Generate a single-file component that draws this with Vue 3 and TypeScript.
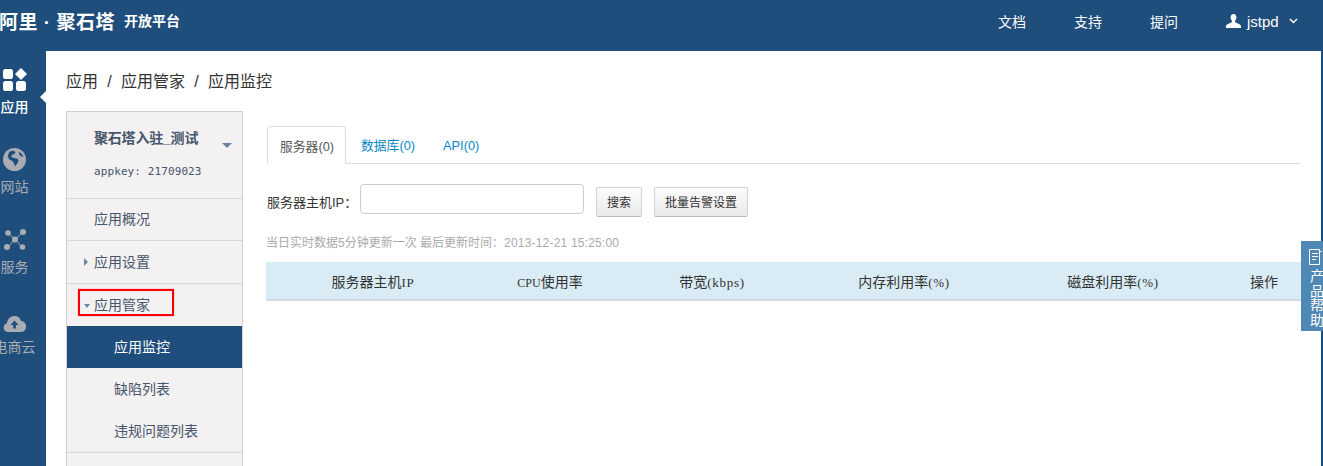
<script setup lang="ts">
interface Col { pre: string; label: string; latin: string }
const cols: Col[] = [
  { pre: '', label: '服务器主机', latin: 'IP' },
  { pre: 'CPU', label: '使用率', latin: '' },
  { pre: '', label: '带宽', latin: '(kbps)' },
  { pre: '', label: '内存利用率', latin: '(%)' },
  { pre: '', label: '磁盘利用率', latin: '(%)' },
  { pre: '', label: '操作', latin: '' },
]
const subItems = ['应用监控', '缺陷列表', '违规问题列表']
</script>

<template>
  <div class="page">
    <header class="top">
      <div class="brand">
        <span class="logo">阿里 · 聚石塔</span>
        <span class="platform">开放平台</span>
      </div>
      <nav class="topnav">
        <a>文档</a>
        <a>支持</a>
        <a>提问</a>
        <span class="user">
          <svg width="15" height="14" viewBox="0 0 15 14"><path fill="#fff" d="M7.5 0C5.6 0 4.6 1.300 4.600 3.200c0 1.400.5 2.700 1.300 3.500v1.300C5 9.200 0 9.800 0 12.200V14h15v-1.800c0-2.400-5-3-5.900-4.200V6.700c.8-.8 1.300-2.100 1.300-3.500C10.400 1.300 9.400 0 7.500 0z"/></svg>
          <span class="uname">jstpd</span>
          <svg width="9" height="6" viewBox="0 0 9 6"><path fill="none" stroke="#fff" stroke-width="1.500" d="M1 1l3.500 3.500L8 1"/></svg>
        </span>
      </nav>
    </header>

    <div class="body">
      <aside class="rail">
        <div class="rail-item active">
          <div class="ico"><svg width="24" height="23" viewBox="0 0 24 23"><g fill="#fff"><rect x="0" y="1" width="10" height="10" rx="2.500"/><path d="M18 0l6 6-6 6-6-6z"/><rect x="0" y="13" width="10" height="10" rx="2.500"/><rect x="13" y="13" width="10" height="10" rx="2.500"/></g></svg></div>
          <span>应用</span>
        </div>
        <div class="rail-item">
          <div class="ico"><svg width="23" height="23" viewBox="0 0 22 22"><circle cx="11" cy="11" r="11" fill="#a9adb3"/><path fill="#1f4e7c" d="M6 3.500l4-1 2 1.500-1.500 2-2 .5-.5 2 2.500 1 3 .5 1.500 2-1.500 3-2 2.500-1-3-1.500-2-3-1.500-1.500-3zM15 3.500l3 2 1.500 3-2.500-.5-1.500-2z"/></svg></div>
          <span>网站</span>
        </div>
        <div class="rail-item">
          <div class="ico"><svg width="24" height="23" viewBox="0 0 24 23"><g fill="#a9adb3"><path fill="none" stroke="#a9adb3" stroke-width="1" d="M5 5l7 6.500L20 4M5 19l7-7.500L19 19"/><circle cx="5" cy="5" r="2.800"/><circle cx="20" cy="4" r="3"/><circle cx="12" cy="11.500" r="3"/><circle cx="4" cy="19" r="3"/><circle cx="19.500" cy="19" r="2.800"/></g></svg></div>
          <span>服务</span>
        </div>
        <div class="rail-item">
          <div class="ico low"><svg width="25" height="16" viewBox="0 0 25 18"><path fill="#a9adb3" d="M5 18a5 5 0 0 1-1-9.800C4.500 3.500 8 0 12.500 0c3.500 0 6.500 2.200 7.500 5.500A6.300 6.300 0 0 1 20 18z"/><path fill="#1f4e7c" d="M12.500 5l4.500 5h-3v4h-3v-4H8z"/></svg></div>
          <span>电商云</span>
        </div>
      </aside>

      <main class="main">
        <div class="crumbs"><span>应用</span><span>/</span><span>应用管家</span><span>/</span><span>应用监控</span></div>
        <div class="columns">
          <section class="side">
            <div class="side-head">
              <div class="app-name">聚石塔入驻_测试</div>
              <div class="app-key">appkey: 21709023</div>
              <i class="caret-down big"></i>
            </div>
            <div class="side-row r1">应用概况</div>
            <div class="side-row r2"><i class="caret-right"></i>应用设置</div>
            <div class="group">
              <div class="side-row plain">
                <span class="marked"><i class="caret-down"></i>应用管家</span>
              </div>
              <div
                v-for="(item, i) in subItems"
                :key="item"
                class="sub"
                :class="{ on: i === 0 }"
              >{{ item }}</div>
            </div>
          </section>

          <section class="panel">
            <div class="tabs">
              <a class="tab current">服务器(0)</a>
              <a class="tab">数据库(0)</a>
              <a class="tab">API(0)</a>
            </div>
            <div class="form">
              <label>服务器主机IP：</label>
              <input class="ip" type="text" />
              <button class="btn first" type="button">搜索</button>
              <button class="btn" type="button">批量告警设置</button>
            </div>
            <p class="note">当日实时数据5分钟更新一次 最后更新时间：<span class="date">2013-12-21 15:25:00</span></p>
            <div class="thead">
              <div v-for="c in cols" :key="c.label" class="th"><span v-if="c.pre" class="lat pre">{{ c.pre }}</span>{{ c.label }}<span v-if="c.latin" class="lat">{{ c.latin }}</span></div>
            </div>
          </section>
        </div>
      </main>
      <div class="strip"></div>
    </div>

    <div class="help">
      <svg width="13" height="16" viewBox="0 0 13 16"><path fill="none" stroke="#fff" d="M.5.500h10v15H.5zM3 4.500h6M3 7.500h6M3 10.500h4M10.500 2.500h2"/></svg>
      <span>产</span><span>品</span><span>帮</span><span>助</span>
    </div>
  </div>
</template>

<style>
html, body { margin: 0; padding: 0; background: #1f4e7c; }
</style>

<style scoped>
.page {
  position: relative;
  width: 1323px;
  height: 466px;
  overflow: hidden;
  background: #1f4e7c;
  font-family: "Liberation Sans", "Noto Sans CJK SC", sans-serif;
  color: #333;
}
.top {
  height: 51px;
  display: flex;
  align-items: center;
  justify-content: space-between;
  color: #fff;
  padding-bottom: 9px;
  box-sizing: border-box;
}
.brand { display: flex; align-items: center; gap: 9px; margin-left: -1px; margin-bottom: 2px; }
.logo { font-size: 19px; font-weight: 700; letter-spacing: 0.5px; white-space: pre; }
.platform { font-size: 14px; font-weight: 700; }
.topnav { display: flex; align-items: center; font-size: 14px; margin-right: 25px; }
.topnav a { margin-right: 48px; }
.user { display: flex; align-items: center; }
.uname { margin: 0 8px 0 6px; font-size: 15px; width: 34px; }

.body { display: flex; height: 415px; }
.rail { width: 46px; flex: none; display: flex; flex-direction: column; padding-top: 17px; box-sizing: border-box; position: relative; }
.rail-item {
  width: 29px;
  height: 80px;
  display: flex;
  flex-direction: column;
  align-items: center;
  color: #a9adb3;
  font-size: 14px;
  white-space: nowrap;
  line-height: 18px;
}
.ico { height: 23px; margin-bottom: 7px; display: flex; align-items: flex-end; flex: none; }
.ico.low { margin-top: 1px; margin-bottom: 6px; }
.ico svg { display: block; }
.rail-item.active { color: #fff; font-weight: 500; }
.rail-item.active::after {
  content: "";
  position: absolute;
  left: 40px;
  top: 40px;
  border: 6px solid transparent;
  border-left: 0;
  border-right-color: #fff;
}
.main { flex: 1; background: #fff; padding: 0 20px; min-width: 0; }
.strip { width: 2px; flex: none; }
.crumbs { display: flex; gap: 8px; font-size: 16px; color: #333; line-height: 22px; margin-top: 20px; height: 40px; }
.crumbs span:nth-child(even) { width: 7px; text-align: center; }
.columns { display: flex; gap: 24px; }
.side {
  width: 177px;
  flex: none;
  box-sizing: border-box;
  height: 400px;
  background: #f3f1f2;
  border: 1px solid #d0d0d0;
  border-bottom: 0;
  color: #47566b;
  font-size: 14px;
}
.side-head { position: relative; height: 87px; padding: 17px 27px 0; box-sizing: border-box; border-bottom: 1px solid #d8d8d8; }
.app-name { font-size: 14px; font-weight: 700; line-height: 18px; letter-spacing: -0.2px; white-space: nowrap; }
.app-key { font-family: "DejaVu Sans Mono", monospace; font-size: 11px; line-height: 18px; margin-top: 16px; letter-spacing: 0.1px; white-space: nowrap; }
.side-row {
  position: relative;
  height: 42px;
  line-height: 41px;
  padding-left: 27px;
  border-bottom: 1px solid #d8d8d8;
  box-sizing: border-box;
}
.side-row.r2 { height: 43px; line-height: 42px; }
.side-row.plain { border-bottom: 0; }
.group { border-bottom: 1px solid #d8d8d8; }
.marked {
  position: absolute;
  left: 11px;
  top: 5px;
  width: 96px;
  height: 27px;
  line-height: 28px;
  padding-left: 14px;
  box-sizing: border-box;
  border: 2px solid #f00;
  box-shadow: 0 0 1px #f66;
  display: block;
}
.sub { height: 42px; line-height: 42px; padding-left: 47px; }
.sub.on { background: #1f4e7c; color: #fff; }
.caret-right, .caret-down { position: absolute; width: 0; height: 0; border-style: solid; border-color: transparent; }
.caret-right { left: 17px; top: 17px; border-width: 4px 0 4px 4px; border-left-color: #6d83a1; }
.caret-down { left: 4px; top: 13px; border-width: 4px 3.500px 0; border-top-color: #6d83a1; }
.caret-down.big { left: 155px; top: 31px; border-width: 5px 5px 0; }

.panel { width: 1034px; flex: none; margin-top: 15px; }
.tabs { display: flex; height: 38px; border-bottom: 1px solid #ddd; font-size: 12.800px; box-sizing: border-box; }
.tab { padding: 0 14px; line-height: 39px; color: #0a86c8; height: 38px; box-sizing: border-box; }
.tab.current {
  color: #555;
  padding: 0 12px;
  background: #fff;
  border: 1px solid #ddd;
  border-bottom: 0;
  border-radius: 4px 4px 0 0;
  margin-right: 1px;
  width: 79px;
  white-space: nowrap;
}
.form { display: flex; align-items: flex-start; height: 30px; margin-top: 20px; font-size: 13px; color: #333; }
.form label { width: 93px; flex: none; line-height: 30px; margin-top: 4px; }
.ip { width: 224px; height: 30px; box-sizing: border-box; border: 1px solid #ccc; border-radius: 4px; background: #fff; padding: 0; outline: 0; }
.btn {
  height: 30px;
  margin-top: 3px;
  padding: 0 10px 1px;
  font: inherit;
  font-size: 12px;
  color: #333;
  border: 1px solid #d3d3d3;
  border-bottom-color: #bbb;
  border-radius: 2px;
  background: linear-gradient(#fdfdfd, #e8e8e8);
}
.btn.first { margin-left: 12px; margin-right: 12px; }
.note { margin: 20px 0 0 -1px; font-size: 12px; line-height: 18px; color: #aaa; }
.date { letter-spacing: 0.2px; }
.thead {
  display: grid;
  grid-template-columns: 214px 140px 184px 198px 220px 79px;
  margin: 10px 0 0 -1px;
  height: 39px;
  box-sizing: border-box;
  background: #d9ecf5;
  border-bottom: 2px solid #d5dbe0;
  font-size: 14px;
  line-height: 40px;
  color: #333;
  text-align: center;
}
.th:last-child { padding-left: 5px; }
.th:nth-child(4), .th:nth-child(5) { padding-left: 2px; }
.lat { font-family: "Liberation Serif", serif; font-size: 13px; letter-spacing: 0.7px; }
.lat.pre { font-size: 12px; letter-spacing: 0; }
.help {
  position: absolute;
  left: 1301px;
  top: 241px;
  width: 22px;
  height: 90px;
  background: #4f87b5;
  color: #fff;
  font-size: 14px;
  line-height: 14.500px;
  display: flex;
  flex-direction: column;
  padding: 8px 0 0 9px;
  box-sizing: border-box;
  overflow: hidden;
}
.help svg { flex: none; margin-bottom: 4px; margin-left: -1px; }
.help span { white-space: nowrap; }
</style>
